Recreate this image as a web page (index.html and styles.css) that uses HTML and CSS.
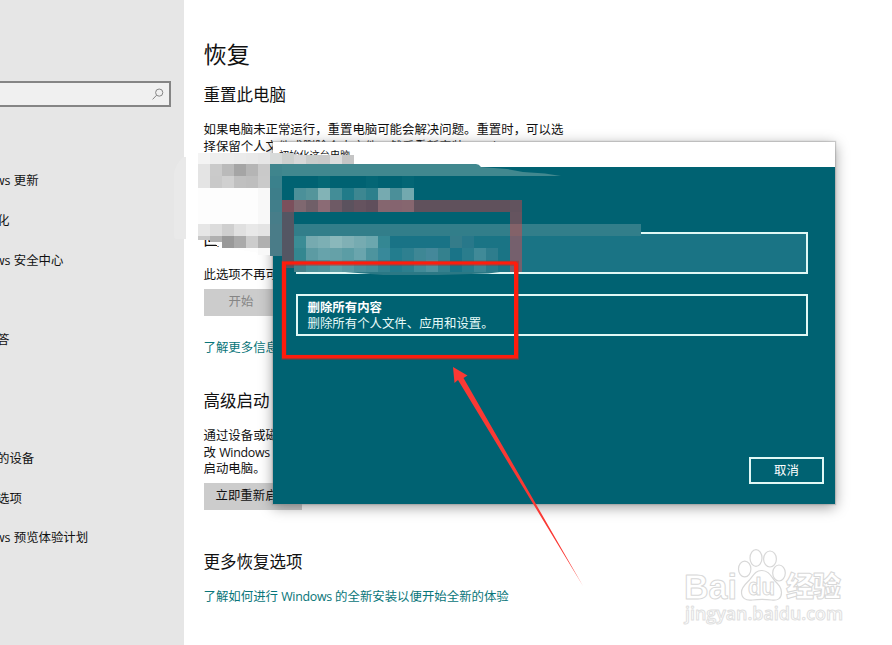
FILE: index.html
```html
<!DOCTYPE html>
<html lang="zh-CN">
<head>
<meta charset="utf-8">
<title>恢复</title>
<link rel="stylesheet" href="styles.css">
</head>
<body>
<div class="window">
  <aside class="sidebar">
    <div class="search">
      <svg width="12" height="13" viewBox="0 0 12 13" fill="none" stroke="#858585" stroke-width="1"><circle cx="7.2" cy="4.6" r="3.6"/><path d="M4.6 7.2L.6 11.4"/></svg>
    </div>
    <nav class="nav">
      <span>ws 更新</span>
      <span class="cut">化</span>
      <span>ws 安全中心</span>
      <span></span>
      <span class="cut">答</span>
      <span></span>
      <span></span>
      <span class="cut">的设备</span>
      <span class="cut">选项</span>
      <span>ws 预览体验计划</span>
    </nav>
  </aside>
  <main class="content">
    <h1>恢复</h1>
    <section class="reset">
      <h2>重置此电脑</h2>
      <p>如果电脑未正常运行，重置电脑可能会解决问题。重置时，可以选<br>择保留个人文件或删除个人文件，然后重新安装 <span class="latin">Windows</span>。</p>
    </section>
    <section class="previous">
      <h2>回退</h2>
      <p>此选项不再可用</p>
      <button class="btn disabled">开始</button>
      <a class="link">了解更多信息</a>
    </section>
    <section class="advanced">
      <h2>高级启动</h2>
      <p>通过设备或磁盘<br>改 <span class="latin">Windows</span><br>启动电脑。</p>
      <button class="btn restart">立即重新启</button>
    </section>
    <section class="more">
      <h2>更多恢复选项</h2>
      <a class="link">了解如何进行 <span class="latin">Windows</span> 的全新安装以便开始全新的体验</a>
    </section>
  </main>
  <div class="dialog">
    <div class="titlebar">初始化这台电脑</div>
    <div class="dialog-body">
      <div class="option selected"></div>
      <div class="option"><b>删除所有内容</b><span>删除所有个人文件、应用和设置。</span></div>
      <button class="cancel">取消</button>
    </div>
  </div>
  <svg class="overlay" width="892" height="645" viewBox="0 0 892 645">
    <path fill="#e9e9e9" d="M184 157h2v82h-10q-2-1-2-4v-62q2-9 8-15z"/>
    <g shape-rendering="crispEdges">
      <path fill="#fdfdfd" d="M198 188h72v67l-52-9-8-6h-12z"/>
      <path fill="#f8f8f8" d="M258 188h12v67h-12z"/>
      <g id="mosaic"></g>
    </g>
    <path fill="#2b7885" d="M345 272h155l-12 1.500-50 1.500h-55z"/>
    <path fill="#41888f" d="M282 164h194q3 0 5 3l26 2 16 3 22 1.500 16 2.500H282z"/>
    <rect x="284" y="263.300" width="232.500" height="94" fill="none" stroke="#bb2a20" stroke-opacity=".5" stroke-width="5"/>
    <path fill="#ff1c0c" fill-rule="evenodd" d="M282 261.500h234l2 2v95H282zM286 264.500v90.500h228v-90.500z"/>
    <path fill="#fa3934" d="M453 367L467.500 375.500 463.500 378 583 586 458 380 454.500 383z"/>
    <g class="mark">
      <ellipse cx="744.700" cy="569" rx="6.200" ry="7.800"/><ellipse cx="756" cy="558" rx="6" ry="8.300"/><ellipse cx="770" cy="559" rx="6.400" ry="8"/><ellipse cx="779" cy="573" rx="6.300" ry="8"/>
      <path d="M761.500 570.500c7 0 9 5 13 10 4 4 7 7 7 12 0 6-4 8.500-10 7.500-7-1-12-1-19 0-7 1-11-2-11-8 0-5 4-8 8-12 4-5 6-9.500 12-9.500z"/>
      <text x="684" y="599" class="bai" textLength="53" lengthAdjust="spacingAndGlyphs">Bai</text>
      <text x="748" y="595" class="du" textLength="27" lengthAdjust="spacingAndGlyphs">du</text>
      <text x="786" y="597" class="jing" textLength="55">经验</text>
      <text x="685" y="620" class="url" textLength="158" lengthAdjust="spacingAndGlyphs">jingyan.baidu.com</text>
    </g>
  </svg>
</div>
<script src="mosaic.js"></script>
</body>
</html>
```
FILE: styles.css
```css
* { box-sizing: border-box; }
body { margin: 0; overflow: hidden; background: #fff; color: #111; font: 12.42px/16.5px "Open Sans", "Noto Sans CJK SC", sans-serif; }
.window { position: relative; display: flex; width: 892px; height: 645px; overflow: hidden; }
.sidebar { width: 184px; flex: none; background: #e6e6e6; padding-top: 81px; }
.search { width: 171px; height: 26px; border: 2px solid #858585; border-left: 0; background: #f0f0f0; display: flex; justify-content: flex-end; align-items: center; padding-right: 5px; }
.nav { display: flex; flex-direction: column; margin-top: 54.2px; }
.nav span { height: 39.7px; line-height: 39.7px; white-space: nowrap; margin-left: -5px; }
.nav .cut { margin-left: -3px; }
.content { padding: 37px 0 0 19.5px; width: 500px; }
h1, h2, p { margin: 0; font-weight: 400; }
h1 { font-size: 23.2px; line-height: 34px; }
h2 { font-size: 16.5px; line-height: 24px; }
.latin { letter-spacing: -.3px; }
.reset { padding-top: 12px; }
.reset p { margin-top: 15px; white-space: nowrap; }
.previous { padding-top: 72px; }
.previous p { margin-top: 16px; }
.btn { display: block; border: 0; padding: 0; height: 27px; background: #ccc; color: #111; font: inherit; text-align: center; }
.disabled { width: 75px; margin-top: 5px; padding-top: 1px; color: #858585; }
.link { display: block; color: #087579; white-space: nowrap; }
.previous .link { margin-top: 24px; }
.advanced { padding-top: 33px; }
.advanced p { margin-top: 15px; }
.restart { width: 98px; margin-top: 5px; padding: 1px 0 0 12px; text-align: left; white-space: nowrap; }
.more { padding-top: 40px; }
.more .link { margin-top: 15px; }
.dialog { position: absolute; left: 273px; top: 142px; width: 562px; height: 362px; background: #006272; box-shadow: 0 0 1px 1px #8c8c8c66, 0 3px 13px #0006; }
.titlebar { height: 25px; background: #fff; padding: 5px 6px; font-size: 10.2px; line-height: 16px; }
.dialog-body { display: flex; flex-direction: column; padding: 65px 11px 0 23px; }
.option { display: flex; flex-direction: column; width: 511.5px; height: 42px; margin-bottom: 20px; border: 2px solid #e0f8f5; padding: 4px 9.5px; color: #e6faf8; line-height: 16px; }
.option b { color: #fff; }
.selected { background: #1a7485; }
.cancel { align-self: flex-end; width: 75px; height: 27px; margin-top: 101px; padding: 1px 0 0; border: 2px solid #e0f8f5; background: transparent; color: #fff; font: inherit; }
.overlay { position: absolute; left: 0; top: 0; }
.mark { fill: #fff; stroke: #d8d8d8; stroke-width: 1.2; }
.mark text { stroke-width: 1; stroke-linejoin: round; }
.bai { font: 700 35px "Liberation Sans", sans-serif; }
.du { font: 700 23px "Liberation Sans", sans-serif; }
.jing { font: 900 28px "Noto Sans CJK SC", sans-serif; }
.mark .url { font: 600 18px "Open Sans", sans-serif; stroke: #e0e0e0; }
```
FILE: mosaic.js
```javascript
// Each run: y, height, x of the first cell, then one colour per 12px cell.
const runs = [
  [153, 11, 198, "f4f4f4 eee ededed ebebeb e9e9e9 e6e6e6 d8dbda cdd0ce"],
  [155, 9, 294, "d8d8d8 c9cccb c9c9c9 ddd c5c5c5"],
  [164, 12, 198, "e4e4e4 cacaca bababa a5a5a5 b5b5b5 c9c9c9 3f858d"],
  [176, 12, 198, "e4e4e4 c9c9c9 d0d0d0 c0c0c0 bebebe cacaca 3b818c 006272 006272 006272 046875 006272 006272 006272 046675 006272 006272 046675"],
  [188, 12, 270, "3d7e8a 006272 4b9099 54959b 82b3b6 438d97 217b89 3d8791 2d808c 76aab0 4b8f99 72a9af"],
  [200, 12, 270, "417e8a 7b505c 7f6870 705f68 8b6b75 6e5a65 5b525e 65535f 604f5c 85666f 85646f 86666f 60515c 60515c 60515c 60515c 60515c 60515c 60515c 60515c 62535e"],
  [212, 12, 270, "477d89 545663"],
  [212, 12, 510, "65545f"],
  [224, 12, 198, "e6e6e6 dcdcdc cfcfcf e0e0e0 e8e8e8 e4e4e4 4a7c88 545663"],
  [236, 4, 198, "c8c8c8"],
  [236, 6, 210, "b0b0b0"],
  [236, 12, 222, "999 aaa ccc b0b0b0 4a7c88 545663 3b8c95 76aab0 7cafb4 8ab8bb 80b0b5 76abb1 6ba7ae 348793 197386 197386 197386 197386 197386 347c8a 28788a"],
  [248, 8, 270, "4a7c88"],
  [248, 12, 282, "545663 348790 5c9ba3 67a3ab 65a1a8 5b9da5 6aa5ad 4d949e 38899a 237d8e 2e8090 3e8795 44889a 34818e 1a7488 2a7d8d 408a98 2e7d8d"],
  [260, 8, 282, "545663"],
  [260, 12, 294, "45818a 4b9099 4f929b 61a0a7 5a98a2 4c8f9b 458c98 34818f 257b8c 2d7f8e 418b98 4f919e 34808e 1b7386 287b8b 3c8593 2a7a8a"],
  [236, 36, 510, "75606d"]
];
const layer = document.getElementById("mosaic");
function cell(x, y, width, height, fill) {
  const rect = document.createElementNS("http://www.w3.org/2000/svg", "rect");
  const attrs = { x, y, width, height, fill };
  for (const key in attrs) rect.setAttribute(key, attrs[key]);
  layer.append(rect);
}
for (const [y, h, x, colors] of runs)
  colors.split(" ").forEach((color, i) => cell(x + i * 12, y, 12, h, "#" + color));
cell(294, 224, 347, 12, "#327e8a");
cell(510, 224, 12, 12, "#836269");
```
